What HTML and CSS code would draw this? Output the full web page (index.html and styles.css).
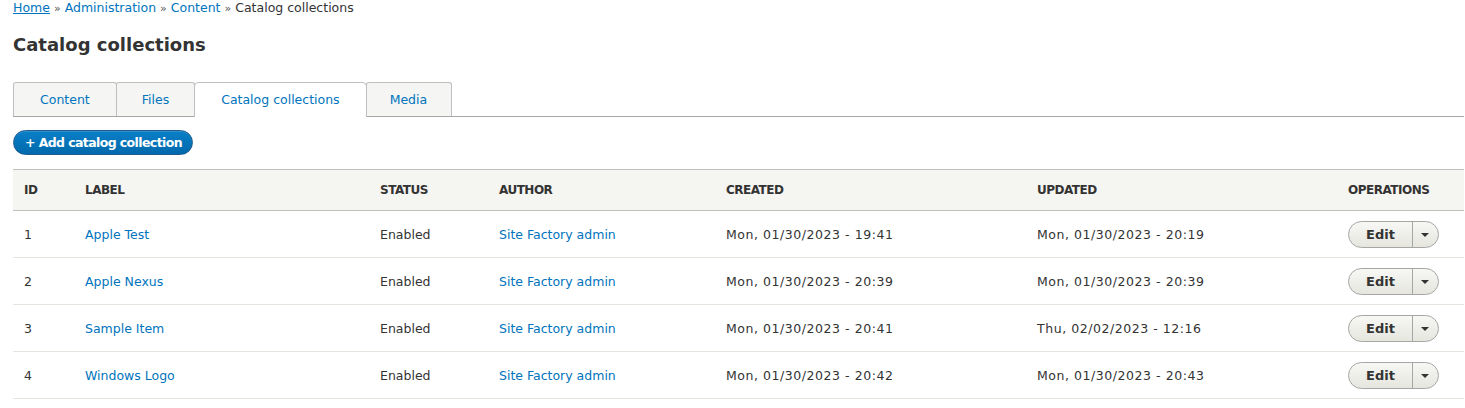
FILE: index.html
```html
<!DOCTYPE html>
<html lang="en">
<head>
<meta charset="utf-8">
<title>Catalog collections</title>
<link rel="stylesheet" href="styles.css">
</head>
<body>
<nav class="breadcrumb">
  <a href="#" class="crumb-home">Home</a> <span class="sep">»</span> <a href="#">Administration</a> <span class="sep">»</span> <a href="#">Content</a> <span class="sep">»</span> <span class="current">Catalog collections</span>
</nav>
<h1 class="page-title">Catalog collections</h1>
<ul class="tabs">
  <li class="tab"><a href="#">Content</a></li>
  <li class="tab tab-files"><a href="#">Files</a></li>
  <li class="tab active"><a href="#">Catalog collections</a></li>
  <li class="tab tab-media"><a href="#">Media</a></li>
</ul>
<div class="actions">
  <a href="#" class="button-primary">+ Add catalog collection</a>
</div>
<table class="listing">
  <colgroup>
    <col class="c-id"><col class="c-label"><col class="c-status"><col class="c-author"><col class="c-created"><col class="c-updated"><col class="c-ops">
  </colgroup>
  <thead>
    <tr><th>ID</th><th>Label</th><th>Status</th><th>Author</th><th>Created</th><th>Updated</th><th>Operations</th></tr>
  </thead>
  <tbody>
    <tr><td>1</td><td><a href="#">Apple Test</a></td><td>Enabled</td><td><a href="#">Site Factory admin</a></td><td class="date">Mon, 01/30/2023 - 19:41</td><td class="date">Mon, 01/30/2023 - 20:19</td><td><div class="dropbutton"><span class="db-main">Edit</span><span class="db-toggle"><span class="arrow"></span></span></div></td></tr>
    <tr><td>2</td><td><a href="#">Apple Nexus</a></td><td>Enabled</td><td><a href="#">Site Factory admin</a></td><td class="date">Mon, 01/30/2023 - 20:39</td><td class="date">Mon, 01/30/2023 - 20:39</td><td><div class="dropbutton"><span class="db-main">Edit</span><span class="db-toggle"><span class="arrow"></span></span></div></td></tr>
    <tr><td>3</td><td><a href="#">Sample Item</a></td><td>Enabled</td><td><a href="#">Site Factory admin</a></td><td class="date">Mon, 01/30/2023 - 20:41</td><td class="date">Thu, 02/02/2023 - 12:16</td><td><div class="dropbutton"><span class="db-main">Edit</span><span class="db-toggle"><span class="arrow"></span></span></div></td></tr>
    <tr><td>4</td><td><a href="#">Windows Logo</a></td><td>Enabled</td><td><a href="#">Site Factory admin</a></td><td class="date">Mon, 01/30/2023 - 20:42</td><td class="date">Mon, 01/30/2023 - 20:43</td><td><div class="dropbutton"><span class="db-main">Edit</span><span class="db-toggle"><span class="arrow"></span></span></div></td></tr>
  </tbody>
</table>
</body>
</html>
```
FILE: styles.css
```css
html, body {
  margin: 0;
  background: #fff;
}
body {
  padding: 0 1px 0 13px;
  font-family: "DejaVu Sans", "Liberation Sans", sans-serif;
  font-size: 12.5px;
  color: #333;
}
a {
  color: #0074bd;
  text-decoration: none;
}
.breadcrumb {
  height: 16px;
  line-height: 16px;
  font-size: 12.5px;
  white-space: nowrap;
}
.breadcrumb .crumb-home {
  text-decoration: underline;
}
.breadcrumb .sep {
  color: #555;
  font-size: 11px;
}
.page-title {
  margin: 17px 0 0;
  height: 24px;
  line-height: 24px;
  font-size: 18px;
  font-weight: bold;
  color: #333;
}
.tabs {
  list-style: none;
  margin: 25px 0 0;
  padding: 0;
  display: flex;
  height: 34px;
  border-bottom: 1px solid #a6a6a6;
}
.tab {
  margin: 0 0 0 -1px;
  border: 1px solid #bfbfbf;
  border-bottom: none;
  background: #f5f5f3;
  height: 33px;
  border-radius: 3px 3px 0 0;
}
.tab:first-child {
  margin-left: 0;
}
.tab a {
  display: block;
  padding: 0 26px;
  line-height: 33px;
}
.tab-files a {
  padding: 0 25px;
}
.tab-media a {
  padding: 0 24px 0 23px;
}
.tab.active {
  background: #fff;
  height: 34px;
  position: relative;
  z-index: 1;
  border-radius: 5px 5px 0 0;
}
.actions {
  margin-top: 13px;
  height: 25px;
  display: flex;
}
.button-primary {
  display: block;
  height: 25px;
  line-height: 24px;
  padding: 0 10px 0 11px;
  box-sizing: border-box;
  border-radius: 13px;
  background: linear-gradient(#0a7fc7, #0069ac);
  border: 1px solid #1e5c90;
  color: #fff;
  font-weight: bold;
  font-size: 12.5px;
  letter-spacing: -0.6px;
  box-shadow: inset 0 1px 0 rgba(255,255,255,0.15);
}
.listing {
  margin-top: 14px;
  width: 1451px;
  border-collapse: collapse;
  table-layout: fixed;
  border-top: 1px solid #bfbfbf;
}
.c-id { width: 61px; }
.c-label { width: 295px; }
.c-status { width: 119px; }
.c-author { width: 227px; }
.c-created { width: 311px; }
.c-updated { width: 311px; }
.c-ops { width: 127px; }
.listing th {
  background: #f5f5f2;
  height: 40px;
  padding: 0 11px;
  text-align: left;
  text-transform: uppercase;
  font-weight: bold;
  font-size: 12px;
  letter-spacing: -0.5px;
  color: #333;
  border-bottom: 1px solid #bfbfbf;
}
.listing td {
  height: 46px;
  padding: 0 11px;
  border-bottom: 1px solid #e6e4df;
  white-space: nowrap;
}
.listing td.date {
  letter-spacing: 0.55px;
}
.dropbutton {
  display: inline-flex;
  height: 27px;
  box-sizing: border-box;
  border: 1px solid #a6a6a6;
  border-radius: 14px;
  background: linear-gradient(#f7f7f4, #e6e6df);
  overflow: hidden;
  vertical-align: middle;
}
.db-main {
  width: 63px;
  line-height: 25px;
  text-align: center;
  font-weight: bold;
  font-size: 13px;
  color: #333;
  border-right: 1px solid #a6a6a6;
}
.db-toggle {
  width: 25px;
  display: flex;
  align-items: center;
  justify-content: center;
}
.arrow {
  width: 0;
  height: 0;
  border-left: 4px solid transparent;
  border-right: 4px solid transparent;
  border-top: 4px solid #333;
  margin-top: 2px;
  margin-right: 2px;
}
```
